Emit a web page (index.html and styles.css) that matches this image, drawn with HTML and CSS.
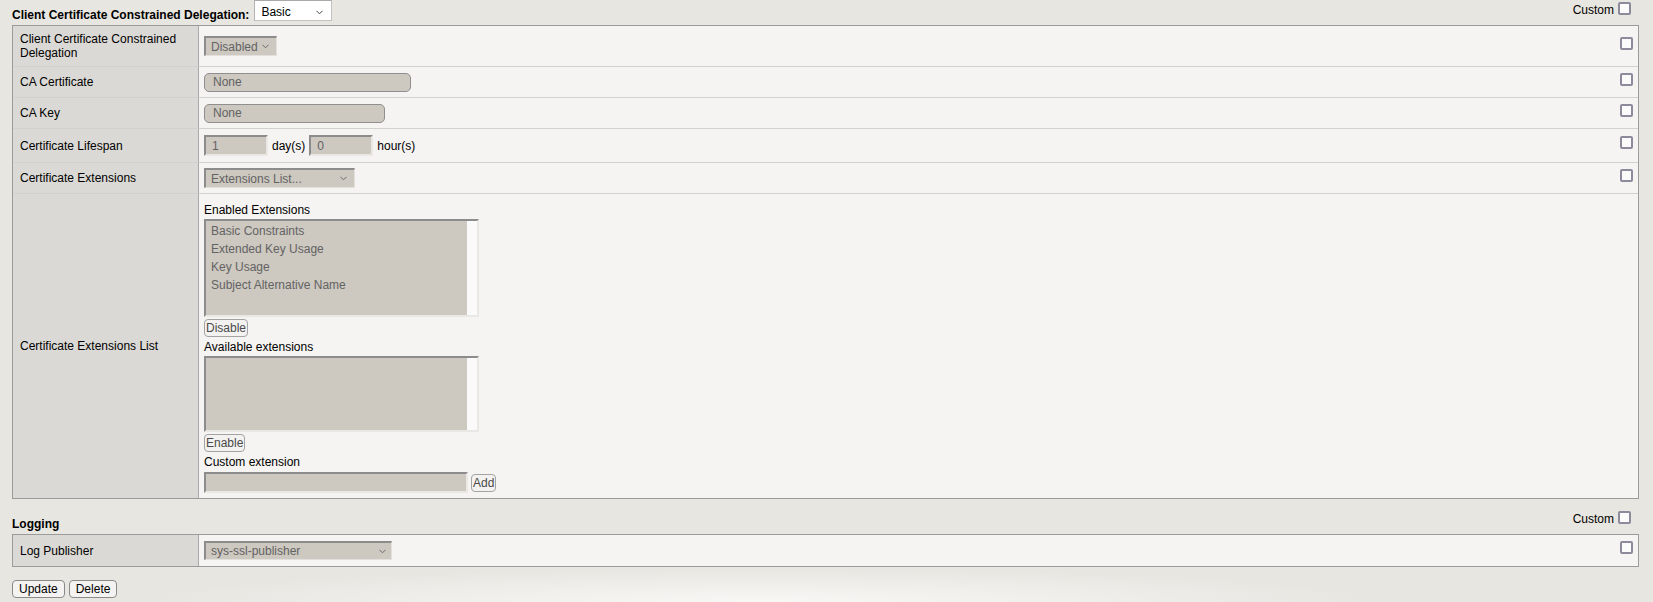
FILE: index.html
```html
<!DOCTYPE html>
<html lang="en">
<head>
<meta charset="utf-8">
<title>Client Certificate Constrained Delegation</title>
<link rel="stylesheet" href="styles.css">
</head>
<body>
<div class="page">
  <div class="sec-head top-head">
    <div class="sec-title">
      <span class="title-text">Client Certificate Constrained Delegation:</span>
      <span class="mode-select"><span>Basic</span><svg class="chev" width="7" height="5" viewBox="0 0 7 5"><polyline points="0.5,0.8 3.5,3.8 6.5,0.8" fill="none" stroke="#444" stroke-width="1"/></svg></span>
    </div>
    <label class="custom"><span class="custom-text">Custom</span><input type="checkbox" class="cb"></label>
  </div>

  <table class="props main">
    <tr class="r1">
      <td class="lbl">Client Certificate Constrained Delegation</td>
      <td class="val">
        <span class="sel w-dis"><span>Disabled</span><svg class="chev" width="7" height="5" viewBox="0 0 7 5"><polyline points="0.5,0.8 3.5,3.8 6.5,0.8" fill="none" stroke="#6a6a6a" stroke-width="1"/></svg></span>
      </td>
      <td class="chk"><input type="checkbox" class="cb"></td>
    </tr>
    <tr class="r2">
      <td class="lbl">CA Certificate</td>
      <td class="val"><span class="filebox w-ca">None</span></td>
      <td class="chk"><input type="checkbox" class="cb"></td>
    </tr>
    <tr class="r3">
      <td class="lbl">CA Key</td>
      <td class="val"><span class="filebox w-key">None</span></td>
      <td class="chk"><input type="checkbox" class="cb"></td>
    </tr>
    <tr class="r4">
      <td class="lbl">Certificate Lifespan</td>
      <td class="val">
        <div class="inline-row">
          <span class="txt w-num">1</span><span class="unit">day(s)</span><span class="txt w-num">0</span><span class="unit">hour(s)</span>
        </div>
      </td>
      <td class="chk"><input type="checkbox" class="cb"></td>
    </tr>
    <tr class="r5">
      <td class="lbl">Certificate Extensions</td>
      <td class="val">
        <span class="sel w-ext"><span>Extensions List...</span><svg class="chev" width="7" height="5" viewBox="0 0 7 5"><polyline points="0.5,0.8 3.5,3.8 6.5,0.8" fill="none" stroke="#6a6a6a" stroke-width="1"/></svg></span>
      </td>
      <td class="chk"><input type="checkbox" class="cb"></td>
    </tr>
    <tr class="r6 last">
      <td class="lbl">Certificate Extensions List</td>
      <td class="val val-top">
        <div class="field-label first">Enabled Extensions</div>
        <div class="listbox lb-enabled">
          <ul class="items">
            <li>Basic Constraints</li>
            <li>Extended Key Usage</li>
            <li>Key Usage</li>
            <li>Subject Alternative Name</li>
          </ul>
          <div class="track"></div>
        </div>
        <button class="btn dis">Disable</button>
        <div class="field-label second">Available extensions</div>
        <div class="listbox lb-available">
          <ul class="items"></ul>
          <div class="track"></div>
        </div>
        <button class="btn dis">Enable</button>
        <div class="field-label third">Custom extension</div>
        <div class="add-row">
          <span class="txt w-custom"></span>
          <button class="btn dis add">Add</button>
        </div>
      </td>
      <td class="chk"></td>
    </tr>
  </table>

  <div class="sec-head log-head">
    <div class="sec-title"><span class="title-text">Logging</span></div>
    <label class="custom"><span class="custom-text">Custom</span><input type="checkbox" class="cb"></label>
  </div>

  <table class="props logging">
    <tr class="r-log last">
      <td class="lbl">Log Publisher</td>
      <td class="val">
        <span class="sel w-log"><span>sys-ssl-publisher</span><svg class="chev" width="7" height="5" viewBox="0 0 7 5"><polyline points="0.5,0.8 3.5,3.8 6.5,0.8" fill="none" stroke="#6a6a6a" stroke-width="1"/></svg></span>
      </td>
      <td class="chk"><input type="checkbox" class="cb"></td>
    </tr>
  </table>

  <div class="actions">
    <button class="btn act">Update</button>
    <button class="btn act">Delete</button>
  </div>
</div>
</body>
</html>
```

FILE: styles.css
```css
html, body {
  margin: 0;
  padding: 0;
}

body {
  width: 1653px;
  height: 602px;
  overflow: hidden;
  background-color: #e8e6e1;
  background-image: radial-gradient(ellipse 620px 34px at 46% 100%, rgba(250, 249, 247, 0.9), rgba(250, 249, 247, 0));
  font-family: "Liberation Sans", Arial, sans-serif;
  font-size: 12px;
  line-height: 14px;
  color: #000;
}

.page {
  margin-left: 12px;
  width: 1627px;
}

/* section headers */
.sec-head {
  display: flex;
  justify-content: space-between;
  align-items: flex-start;
  box-sizing: border-box;
  padding-right: 8px;
}

.top-head {
  height: 25px;
}

.log-head {
  height: 35px;
}

.sec-title {
  display: flex;
  align-items: flex-start;
}

.title-text {
  font-weight: bold;
  line-height: 14px;
  padding-top: 8px;
}

.log-head .title-text {
  padding-top: 18px;
}

.mode-select {
  display: flex;
  align-items: flex-start;
  justify-content: space-between;
  box-sizing: border-box;
  width: 78px;
  height: 21px;
  margin-left: 5px;
  padding: 4px 8px 0 6px;
  background: #fff;
  border: 1px solid #c3c3c3;
  border-top-color: #a9a9a9;
  border-left-color: #b3b3b3;
}

.mode-select .chev {
  margin-top: 5px;
}

.custom {
  display: flex;
  align-items: flex-start;
  padding-top: 2px;
}

.log-head .custom {
  padding-top: 12px;
}

.custom-text {
  margin-top: 1px;
  margin-right: 4px;
}

.cb {
  appearance: none;
  -webkit-appearance: none;
  display: block;
  box-sizing: border-box;
  width: 13px;
  height: 13px;
  margin: 0;
  border: 2px solid #8d8b9b;
  border-radius: 2px;
  background: #fbfbfb;
}

/* property tables */
.props {
  border-collapse: separate;
  border-spacing: 0;
  width: 1627px;
  box-sizing: border-box;
  border: 1px solid #9b9b9b;
  background: #f5f4f2;
}

.props td {
  box-sizing: border-box;
  padding: 0;
  border-bottom: 1px solid #d2d1ce;
  vertical-align: middle;
}

.props tr.last td {
  border-bottom: none;
}

.props td.lbl {
  width: 186px;
  padding: 0 6px 0 7px;
  background: #dbd9d5;
  border-right: 1px solid #a9a9a9;
}

.props td.val {
  padding-left: 5px;
}

.props td.val-top {
  vertical-align: top;
  padding-top: 9px;
}

.props td.chk {
  width: 24px;
  padding-right: 5px;
}

.props td.chk .cb {
  margin-left: auto;
  margin-bottom: 6px;
}

.r1 td { height: 41px; }
.r2 td { height: 31px; }
.r3 td { height: 31px; }
.r4 td { height: 34px; }
.r5 td { height: 31px; }
.r6 td { height: 304px; }
.r-log td { height: 31px; }

/* disabled controls */
.sel,
.txt {
  display: flex;
  align-items: center;
  box-sizing: border-box;
  height: 20px;
  background: #cdc8c0;
  color: #636363;
  border-style: solid;
  border-width: 2px 1px 1px 2px;
  border-color: #8c8c8c #e2e0dc #e2e0dc #8c8c8c;
  white-space: nowrap;
}

.sel {
  justify-content: space-between;
  padding: 0 7px 0 5px;
}

.sel .chev {
  flex: none;
}

.w-dis { width: 73px; }
.w-ext { width: 151px; }
.w-log { width: 188px; height: 19px; padding-right: 5px; }

.txt {
  height: 21px;
  padding: 0 6px;
  border-width: 2px 2px 2px 2px;
  border-color: #8c8c8c #e9e8e5 #e9e8e5 #8c8c8c;
}

.w-num { width: 64px; }
.w-custom { width: 264px; }

.inline-row {
  display: flex;
  align-items: center;
  gap: 4px;
}

.filebox {
  display: flex;
  align-items: center;
  box-sizing: border-box;
  height: 19px;
  padding-left: 8px;
  background: #cdc8c0;
  color: #636363;
  border: 1px solid #8f8f8f;
  border-radius: 5px;
}

.w-ca { width: 207px; }
.w-key { width: 181px; }

/* extensions list */
.field-label {
  line-height: 14px;
  margin-top: 2px;
  margin-bottom: 2px;
}

.field-label.first {
  margin-top: 0;
}

.field-label.second {
  margin-top: 3px;
}

.field-label.third {
  margin-top: 3px;
}

.field-label + .add-row {
  margin-top: 3px;
}

.listbox {
  display: flex;
  box-sizing: border-box;
  width: 275px;
  border-style: solid;
  border-width: 2px 2px 2px 2px;
  border-color: #8c8c8c #e9e8e5 #e9e8e5 #8c8c8c;
  background: #cdc8c0;
}

.lb-enabled { height: 98px; }
.lb-available { height: 76px; }

.items {
  flex: 1;
  margin: 0;
  padding: 1px 0 0 5px;
  list-style: none;
  color: #636363;
}

.items li {
  line-height: 18px;
  height: 18px;
}

.track {
  width: 10px;
  background: #fafafa;
}

.btn {
  display: block;
  box-sizing: border-box;
  height: 18px;
  margin: 2px 0 0 0;
  padding: 0 1px;
  font-family: "Liberation Sans", Arial, sans-serif;
  font-size: 12px;
  line-height: 16px;
  border: 1px solid #a3a3a3;
  border-radius: 4px;
  background: #f3f2f0;
  color: #4a4a4a;
}

.add-row {
  display: flex;
  align-items: center;
}

.btn.add {
  margin: 0 0 0 3px;
}

.actions {
  display: flex;
  gap: 4px;
  margin-top: 13px;
}

.btn.act {
  margin: 0;
  height: 18px;
  padding: 0 6px;
  color: #000;
  border-color: #8a8a8a;
  background: #f4f3f1;
}
```
